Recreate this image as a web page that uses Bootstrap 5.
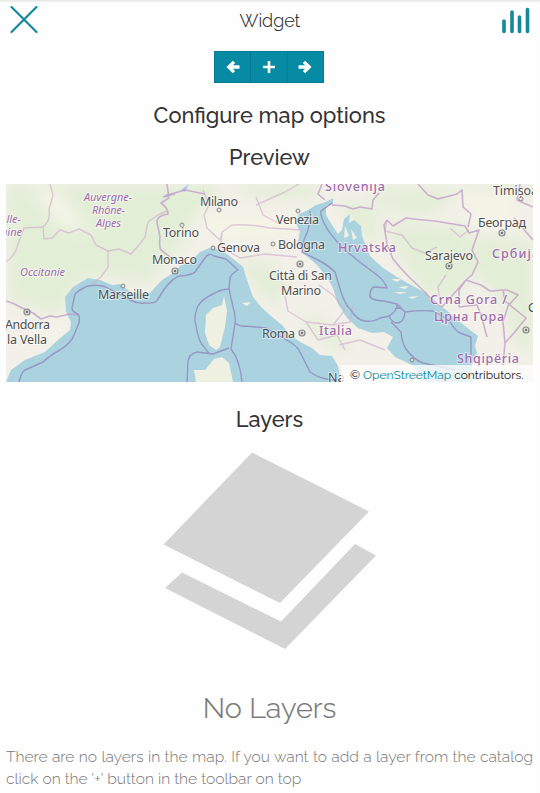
<!DOCTYPE html>
<html lang="en">
<head>
<meta charset="utf-8">
<meta name="viewport" content="width=device-width, initial-scale=1">
<title>Widget</title>
<link href="https://cdn.jsdelivr.net/npm/bootstrap@5.3.0/dist/css/bootstrap.min.css" rel="stylesheet">
<style>
body{font-family:Raleway,Lato,"Open Sans",sans-serif;color:#333;background:#fefefe;overflow:hidden}
.panel{height:793px;padding:0 7px 0 6px;box-shadow:inset 0 3px 3px -2px #ddd}
.top-bar{height:40px;padding:0 2px 0 3px}
.widget-title{font-size:18px;font-weight:300;line-height:24px;color:#222;padding-top:2px;-webkit-text-stroke:.1px #222}
.tools{margin:11px 1px 0 0;height:32px;width:110px}
.tools .btn{--bs-btn-bg:#078aa3;--bs-btn-border-color:#067a91;--bs-btn-color:#fff;--bs-btn-border-radius:0;height:32px;padding:0}
.section-title{font-size:21.8px;line-height:26px;font-weight:500;margin:0}
.map-box{height:198px;margin-top:13px}
.map-box text{font-family:"Noto Sans",sans-serif;font-size:12.5px;fill:#505050;stroke:#fff;stroke-opacity:.5;stroke-width:2px;paint-order:stroke}
.map-box .area{fill:#a06cac;font-weight:500}
.map-box .region{font-style:italic;font-size:11px;font-weight:400}
.credit{right:0;bottom:0;width:192px;height:17px;padding-left:9px;font-size:12px;line-height:20px;background:rgba(255,255,255,.75);color:#222;white-space:nowrap}
.credit a{color:#078aa3}
.empty-title{font-size:28.8px;font-weight:300;line-height:36px;color:#777;-webkit-text-stroke:.2px #777}
.empty-text{font-size:15.600px;font-weight:300;line-height:22px;color:#777;margin:0;text-align:justify}
</style>
<script src="https://cdn.jsdelivr.net/npm/bootstrap@5.3.0/dist/js/bootstrap.bundle.min.js"></script>
</head>
<body>
<main class="panel d-flex flex-column">
<header class="top-bar d-flex justify-content-between align-items-center flex-shrink-0">
<svg width="30" height="30" viewBox="0 0 30 30" fill="none" stroke="#15889d" stroke-width="2.2" stroke-linecap="round"><path d="M2.500 2 27.500 27M27.500 2 2.500 27"/></svg>
<span class="widget-title">Widget</span>
<svg width="30" height="30" viewBox="0 0 30 30" stroke="#15889d" stroke-width="3.600" stroke-linecap="round"><path d="M3 16v10.500M11 7v19.500M18.500 12v14.500M26.500 4.500v22"/></svg>
</header>
<div class="tools btn-group align-self-center flex-shrink-0">
<button class="btn d-flex align-items-center justify-content-center" aria-label="Back"><svg width="14" height="14" viewBox="0 0 14 14" fill="none" stroke="#fff" stroke-width="3.300"><path d="M13.500 7H3M8 1.800 2.800 7 8 12.200"/></svg></button>
<button class="btn d-flex align-items-center justify-content-center" aria-label="Add"><svg width="14" height="14" viewBox="0 0 14 14" stroke="#fff" stroke-width="2.600"><path d="M1 7h12M7 1v12"/></svg></button>
<button class="btn d-flex align-items-center justify-content-center" aria-label="Next"><svg width="14" height="14" viewBox="0 0 14 14" fill="none" stroke="#fff" stroke-width="3.300"><path d="M.5 7H11M6 1.800 11.200 7 6 12.200"/></svg></button>
</div>
<h4 class="section-title text-center" style="margin-top:20px"><span>Configure map options</span></h4>
<h4 class="section-title text-center" style="margin-top:16px"><span>Preview</span></h4>
<div class="map-box position-relative overflow-hidden flex-shrink-0">
<svg class="d-block" width="527" height="198" viewBox="6 184 527 198">
<defs><filter id="soft" x="-30%" y="-30%" width="160%" height="160%"><feGaussianBlur stdDeviation="7"/></filter></defs>
<rect x="6" y="184" width="527" height="198" fill="#f2f0e8"/>
<g fill="#e3eed7" filter="url(#soft)">
<path d="M6 184H210L220 195 190 225 185 245 165 260 150 285 100 275 75 285 60 315 10 302ZM225 184H320V196L270 200ZM240 260 270 262 290 285 275 305 255 290ZM300 310 330 325 350 345 340 352 310 330ZM370 190 440 188 460 200 420 215 380 208ZM335 200 375 205 380 245 365 240ZM388 222 468 228 475 270 450 300 420 290 395 250ZM475 235 533 240V320L500 300 470 270ZM505 310 533 290V355L515 340ZM450 184H533V192H480Z"/>
</g>
<g fill="#f4f4e6" filter="url(#soft)"><path d="M465 195H515L510 225 475 225ZM190 215 290 215 295 235 215 240ZM20 345 60 320 65 335ZM30 190 60 190 90 235 60 225Z"/></g>
<g fill="#aad3df">
<path d="M6 382 11 370 25 360 45 352 58 340 70 330 71 322 66 312 65 297 73 287 88 278 100 280 112 285 120 284 132 293 150 293 162 280 173 273 180 266 192 260 200 252 212 247 224 252 236 261 243 267 247 280 253 297 262 308 271 316 282 325 290 335 302 343 312 348 320 355 332 356 338 366 341 382Z"/>
<path d="M299 214 308 210 316 205 326 202 333 198 333 204 326 206 326 215 332 225 338 234 342 230 344 219 350 214 349 223 354 220 361 226 362 236 370 256 383 268 397 277 411 285 426 293 432 303 445 309 460 322 470 330 478 336 475 346 477 353 472 364 473 382H425L412 365 395 357 387 348 393 337 384 332 372 333 358 328 347 318 338 304 333 288 327 277 316 264 304 254 298 242 300 231 296 224Z"/>
</g>
<g fill="#eef1e1"><path d="M224 296 227 311 225 327 220 347 216 350 209 345 205 333 206 315 213 308 222 305ZM194 370 205 370 214 359 222 357 229 363 233 382H196ZM345 226 349 236 344 238ZM351 229 357 238 353 240ZM391 279 401 279 397 282ZM398 287 409 286 405 289ZM394 292 407 292 400 294ZM408 297 419 296 412 299ZM242 303 251 302 247 306Z"/></g>
<path d="M189 184 185 192 181 190ZM164 195 174 193 165 197Z" fill="#b3c3ee"/>
<g fill="none" stroke="#cdaccb" stroke-opacity=".6" stroke-width="1.400" stroke-linejoin="round">
<path d="M6 262 Q16 255 18 244L24 228 43 227Q51 220 49 210L53 195 50 184M43 227 44 239 52 238 60 230 69 233 79 229 91 235 96 245 108 251 119 249 131 254 139 245 145 237 148 222 158 215 167 211M108 251 108 267 101 277 92 284M204 215 207 228 220 240 222 232 232 225Q250 224 270 228L302 230M204 215 209 205 203 190M222 232 221 247 240 258 265 254 297 257M256 197 263 215 280 224M256 205 285 192 299 184M285 296 288 311 306 322 333 325 345 310 333 295 319 285M306 322 318 340 337 335 345 350M333 325 350 322 353 306M387 220 385 231 402 235 412 248 425 253 437 247M450 228 460 237 469 230M446 275 438 287 440 303M339 345 360 340 385 350"/>
</g>
<g fill="none" stroke="#c09bc7" stroke-opacity=".75" stroke-width="1.600" stroke-linejoin="round">
<path d="M6 301Q14 303 22 308L33 313 41 319 50 316 57 317 70 314 78 315M167 184 169 198 161 203Q168 208 168 214Q156 216 157 222L160 237Q159 248 161 250L174 260M175 194 163 197M167 195Q175 193 185 190L205 194M322 184 318 194 325 200M332 205 345 206 353 209 360 207 372 209 373 200 379 193M387 220 393 226 406 218Q420 220 435 221L465 226 469 233 479 230 472 250 478 262 472 275 466 280Q450 298 442 307Q433 302 425 292L410 278Q400 268 393 259L387 244 384 225 387 220M418 184 428 195 438 199 457 194 462 190 463 207 471 214 468 227M466 280 481 285 490 291 503 290 507 290 518 295 508 306 503 322 505 343M487 337 481 315 477 305 459 307M466 280 459 290 459 307M503 290 505 301 526 318 514 333 505 343 503 365M520 184 517 200 533 207M514 218 533 240"/>
</g>
<g fill="none" stroke="#9796c5" stroke-width="1.400" stroke-linejoin="round">
<path d="M19 382Q22 371 25 370L43 362Q52 354 60 350 72 342 74 335L79 323Q80 316 78 314 72 312 72 308L75 294Q80 289 88 286 98 284 106 287L130 300Q138 304 145 303 156 304 158 299L165 288Q174 277 180 276 192 275 195 272L205 258Q209 252 214 256L226 259 238 270Q231 274 230 278L229 289 233 307Q236 316 235 323L231 349Q240 360 242 382M229 289Q222 289 215 293 202 299 198 306 193 318 196 325 198 342 205 348 209 355 213 354L229 348M213 354 197 352Q189 354 188 361L187 382M235 323Q240 327 245 326L266 328 290 342Q298 347 300 352L310 372Q322 381 341 380M310 211Q311 220 308 230L304 240 302 252 318 260Q328 265 335 272L341 292Q345 304 350 309 358 321 365 321 374 322 380 318L389 316Q398 310 397 304L384 301Q369 300 370 295 370 289 374 287L387 288Q384 280 377 275L361 263 345 250Q330 235 325 225 320 215 321 211L332 203M397 304 405 312Q420 310 433 311L449 320Q456 332 460 333L471 337M389 316Q392 323 398 323 404 322 405 312 400 306 395 309M391 322 401 332Q402 343 406 349 414 360 423 363L455 370M471 337V355"/>
</g>
<g fill="#ddd" fill-opacity=".6" stroke="#888" stroke-width="1">
<circle cx="182" cy="225" r="2"/><circle cx="219" cy="210" r="2"/><circle cx="213" cy="248" r="2"/><circle cx="273" cy="244" r="2"/><circle cx="298" cy="211" r="2"/><circle cx="123" cy="286" r="2"/><circle cx="521" cy="199" r="2"/><circle cx="412" cy="360" r="2"/>
<g stroke-width="1.200"><circle cx="27" cy="312" r="3"/><circle cx="175" cy="271" r="3"/><circle cx="300" cy="264" r="3"/><circle cx="302" cy="333" r="3"/><circle cx="449" cy="266" r="3"/><circle cx="502" cy="233" r="3"/><circle cx="526" cy="330" r="3"/></g>
</g>
<g fill="#777"><circle cx="27" cy="312" r="1.300"/><circle cx="175" cy="271" r="1.300"/><circle cx="300" cy="264" r="1.300"/><circle cx="302" cy="333" r="1.300"/><circle cx="449" cy="266" r="1.300"/><circle cx="502" cy="233" r="1.300"/><circle cx="526" cy="330" r="1.300"/></g>
<text x="200" y="206" textLength="38">Milano</text>
<text x="276" y="224" textLength="43">Venezia</text>
<text x="163" y="237" textLength="36">Torino</text>
<text x="217" y="252" textLength="43">Genova</text>
<text x="278" y="249" textLength="47">Bologna</text>
<text x="152" y="264" textLength="45">Monaco</text>
<text x="98" y="299" textLength="51">Marseille</text>
<text x="5" y="329" textLength="45">Andorra</text>
<text x="7" y="344" textLength="40">la Vella</text>
<text x="269" y="280" textLength="63">Città di San</text>
<text x="281" y="295" textLength="40">Marino</text>
<text x="262" y="338" textLength="33">Roma</text>
<text x="328" y="382">Na</text>
<text x="493" y="195" textLength="45">Timișoa</text>
<text x="478" y="227" textLength="48">Београд</text>
<text x="425" y="260" textLength="48">Sarajevo</text>
<text x="528" y="312">С</text>
<text class="area" x="325" y="191" textLength="60">Slovenija</text>
<text class="area" x="338" y="252" textLength="58">Hrvatska</text>
<text class="area" x="319" y="335" textLength="33">Italia</text>
<text class="area" x="492" y="258" textLength="47">Србија</text>
<text class="area" x="430" y="304" textLength="77">Crna Gora /</text>
<text class="area" x="434" y="321" textLength="70">Црна Гора</text>
<text class="area" x="457" y="363" textLength="62">Shqipëria</text>
<text class="area region" x="84" y="201" textLength="48">Auvergne-</text>
<text class="area region" x="92" y="214" textLength="33">Rhône-</text>
<text class="area region" x="96" y="227" textLength="25">Alpes</text>
<text class="area region" x="21" y="223" text-anchor="end">elle-</text>
<text class="area region" x="22" y="236" text-anchor="end">aine</text>
<text class="area region" x="20" y="276" textLength="45">Occitanie</text>
</svg>
<div class="credit position-absolute">© <a class="text-decoration-none" href="#">OpenStreetMap</a> contributors.</div>
</div>
<h4 class="section-title text-center" style="margin-top:25px"><span>Layers</span></h4>
<svg class="align-self-center flex-shrink-0" style="margin-top:17px" width="216" height="200" viewBox="162 450 216 200" fill="#d4d4d4"><path d="M252 452.500 369 511.500 280 603 163.500 544.500ZM182 572.500 281 621.500 355 544 376 555.500 285 649 165 588Z"/></svg>
<div class="empty-title text-center" style="margin-top:40px"><span>No Layers</span></div>
<p class="empty-text" style="margin-top:20px">There are no layers in the map. If you want to add a layer from the catalog click on the '+' button in the toolbar on top</p>
</main>
</body>
</html>
